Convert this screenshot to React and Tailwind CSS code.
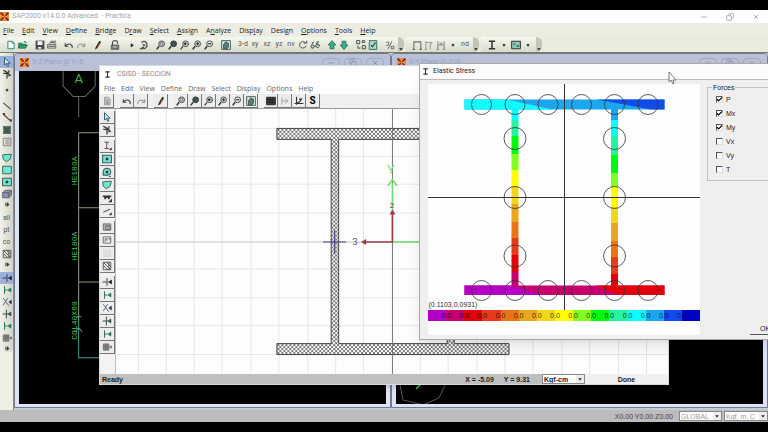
import { useState } from "react";
import { Minus, Copy, X, Check } from "lucide-react";
import clsx from "clsx";

// 16x16 toolbar glyphs
const GLYPHS = {
  new: <path d="M3 2h7l3 3v9H3zM10 2v3h3" fill="#f4fffb" stroke="#2a8f7c" strokeWidth="1.6" />,
  open: <path d="M1 13V5h5l1 2h5v2M1 13l3-5h11l-3 5zM9 3q3-2 5 2" fill="#3aa07c" stroke="#15604a" strokeWidth="1.2" />,
  save: (
    <>
      <path d="M1 1h14v14H1z" fill="#45474c" />
      <path d="M4 2h8v6H4zM5 11h5v3H5z" fill="#f1f1ee" />
    </>
  ),
  print: (
    <>
      <path d="M4 6l2-4h8l-2 4M1 7h13v6H1z" fill="#ddd" stroke="#555" strokeWidth="1.3" />
      <path d="M2 10h11M7 4h4" stroke="#444" strokeWidth="1.4" />
    </>
  ),
  doc: <path d="M4 2h6l3 3v9H4zM6 6h4M6 8h5M6 10h5M6 12h5" fill="#ccc" stroke="#8d8d8d" strokeWidth="1.3" />,
  undo: <path d="M2 5v5h5M2 10q5-6 10-2 2 2 1 5" fill="none" stroke="#444" strokeWidth="1.8" />,
  redo: <path d="M14 5v5H9M14 10Q9 4 4 8q-2 2-1 5" fill="none" stroke="#8b8b86" strokeWidth="1.6" />,
  pencil: (
    <>
      <path d="M4 12L10 1l3 2-6 10-4 2z" fill="#3b2a24" />
      <path d="M9 5l1.5 1L7 12" stroke="#c96a3d" fill="none" strokeWidth="1.2" />
    </>
  ),
  lock: (
    <>
      <path d="M4 8V4q0-3 4-3t4 3v2" fill="none" stroke="#555" strokeWidth="1.8" />
      <path d="M2 8h12v7H2z" fill="#777" stroke="#444" />
      <path d="M5 11h6" stroke="#eee" strokeWidth="1.4" />
    </>
  ),
  play: <path d="M6 5l5 3.5L6 12z" fill="#222" />,
  run: <path d="M4 4q5-4 8 1t-3 9l-6 0 5-3M6 7l4 2" fill="none" stroke="#484848" strokeWidth="1.9" />,
  zoomBox: (
    <>
      <circle cx="9" cy="6" r="4.6" fill="#d9dbd4" stroke="#444" strokeWidth="1.5" />
      <path d="M5 10l-4 5" stroke="#333" strokeWidth="2.4" />
      <path d="M7 4h4v4H7z" fill="none" stroke="#555" />
    </>
  ),
  zoomAll: (
    <>
      <circle cx="9" cy="6" r="4.6" fill="#3c5550" stroke="#333" strokeWidth="1.5" />
      <path d="M5 10l-4 5" stroke="#333" strokeWidth="2.4" />
    </>
  ),
  zoomPrev: (
    <>
      <circle cx="9" cy="6" r="4.6" fill="#cfe3dd" stroke="#444" strokeWidth="1.5" />
      <path d="M5 10l-4 5M7 6h5M9 4L7 6l2 2" stroke="#333" strokeWidth="1.9" fill="none" />
    </>
  ),
  zoomIn: (
    <>
      <circle cx="9" cy="6" r="4.6" fill="#cfe3dd" stroke="#444" strokeWidth="1.5" />
      <path d="M5 10l-4 5" stroke="#333" strokeWidth="2.4" />
      <path d="M6.500 6h5M9 3.500v5" stroke="#222" strokeWidth="1.7" />
    </>
  ),
  zoomOut: (
    <>
      <circle cx="9" cy="6" r="4.6" fill="#e5eae4" stroke="#444" strokeWidth="1.5" />
      <path d="M5 10l-4 5" stroke="#333" strokeWidth="2.4" />
      <path d="M6.500 6h5" stroke="#222" strokeWidth="1.7" />
    </>
  ),
  pan: (
    <>
      <path d="M1 1h14v14H1z" fill="#d7efe6" stroke="#3d5f58" strokeWidth="1.5" />
      <path d="M4 14V7l2-1V4l2-1 2 1 2 1v6l-2 3z" fill="#5b7a72" stroke="#333" />
    </>
  ),
  rotate: <path d="M12 4Q7 0 3 5q-2 6 4 8 5 0 6-4M9 5h5V1" fill="none" stroke="#555" strokeWidth="1.6" />,
  glasses: <path d="M1 10q3-4 6 0-3 6-6 0M9 9q3-4 6 0-3 6-6 0M3 6l3-3M10 6l4-4M7 10h2" fill="none" stroke="#486256" strokeWidth="1.7" />,
  up: <path d="M8 1L2 8h3v6h6V8h3z" fill="#38b48c" stroke="#1b6c54" strokeWidth="1.4" />,
  down: <path d="M8 15L2 8h3V2h6v6h3z" fill="#38b48c" stroke="#1b6c54" strokeWidth="1.4" />,
  tree: <path d="M1 1h5v5H1zM10 1h4v3h-4zM10 9h5v5h-5zM3 9v4h4" fill="none" stroke="#44554f" strokeWidth="1.6" />,
  tick: (
    <>
      <path d="M2 1h12v14H2z" fill="#a8dbc9" stroke="#2e7765" strokeWidth="1.6" />
      <path d="M5 8l2 3 5-7" fill="none" stroke="#333" strokeWidth="1.7" />
    </>
  ),
  ratio: <path d="M2 4q3-3 4 1t-4 4M11 2L5 14M10 10h4v4h-4z" fill="none" stroke="#666" strokeWidth="1.5" />,
  frame1: <path d="M3 15V3h11v12M1 15h4M12 15h4" fill="none" stroke="#6d6d72" strokeWidth="1.7" />,
  frame2: <path d="M3 15V2M3 4h10l-3 4M10 15V6M1 15h4" fill="none" stroke="#96968f" strokeWidth="1.5" />,
  frame3: <path d="M3 15V2M13 15V2M3 8h10M1 15h4M11 15h4M6 4l2 3 2-3" fill="none" stroke="#7d7d7d" strokeWidth="1.5" />,
  dot: <circle cx="8" cy="8" r="2.200" fill="#444" />,
  caret: <path d="M3 6h10l-5 6z" fill="#222" />,
  beam: <path d="M3 2h10M3 14h10M8 2v12" fill="none" stroke="#333" strokeWidth="2.400" />,
  image: (
    <>
      <path d="M1 2h14v12H1z" fill="#8fc9b7" stroke="#333" strokeWidth="1.6" />
      <path d="M4 5h3v3H4zM9 8h4v3H9z" fill="#3f7d6c" />
    </>
  ),
  pointer: <path d="M4 1v12l3-3 2 5 2-1-2-4h4z" fill="#c9f2e8" stroke="#2c5b70" strokeWidth="1.5" />,
  reshape: <path d="M2 2l6 3v10M8 5l5 5-3 1M2 7h5M11 2v4" fill="none" stroke="#333" strokeWidth="2" />,
  line: <path d="M2 3l12 10" stroke="#444" strokeWidth="1.7" />,
  lineDots: <path d="M2 2l12 11M1 1h3v3M12 11h3v3" stroke="#5d3a3a" fill="none" strokeWidth="1.7" />,
  cross: <path d="M2 2l12 12M14 2L2 14M4 8h8M8 3v10M3 3h10v10H3z" fill="#7c958a" stroke="#3c554c" strokeWidth="1.7" />,
  list: <path d="M2 2h12v12H2zM5 5h7M5 8h7M5 11h7" fill="#e6e6e0" stroke="#777" strokeWidth="1.4" />,
  poly: <path d="M1 3l14-1-2 8-6 4-5-4z" fill="#74e6cf" stroke="#39705f" strokeWidth="1.6" />,
  rect: <path d="M1 2h14v12H1z" fill="#74e6cf" stroke="#39705f" strokeWidth="1.6" />,
  rectDot: (
    <>
      <path d="M1 2h14v12H1z" fill="#74e6cf" stroke="#39605f" strokeWidth="1.7" />
      <path d="M6 6h4v4H6z" fill="#234" />
    </>
  ),
  round: (
    <>
      <path d="M2 13V7q1-5 6-5t6 5-6 6zM14 15h-3" fill="#74e6cf" stroke="#39605f" strokeWidth="1.700" />
      <path d="M6 6h4v4H6z" fill="#234" />
    </>
  ),
  cube: <path d="M1 6l4-4h10v8l-4 4H1zM1 6h10v8M11 6l4-4" fill="#8d92a8" stroke="#555a70" strokeWidth="1.4" />,
  more: <path d="M6 4v8M9 4v8l5-4z" stroke="#333" fill="#222" strokeWidth="1.600" />,
  hatch: <path d="M2 2h12v12H2zM2 2l12 12M7 2l7 7M2 7l7 7M11 2v12" fill="none" stroke="#555" strokeWidth="1.500" />,
  snapPoint: <path d="M1 8h6M8 2v12M10 8h2M11 8l4-3v6z" fill="#222" stroke="#333" strokeWidth="1.500" />,
  snapEnd: <path d="M4 2v12M4 8h5M10 8l4-3v6z" fill="#1d4f42" stroke="#257a64" strokeWidth="1.600" />,
  snapX: <path d="M2 2l9 12M9 2L2 13M11 8l4-3v6z" fill="#222" stroke="#555a77" strokeWidth="1.500" />,
  snapPerp: <path d="M7 1v14M1 8h9M10 8l4-3v6z" fill="#234" stroke="#33564d" strokeWidth="1.600" />,
  snapGrid: <path d="M2 3h9v10H2zM2 6h9M2 9h9M5 3v10M8 3v10M12 8l3-2v4z" fill="#999" stroke="#666" strokeWidth="1.200" />,
  angles: <path d="M1 5h14M3 5l2 4 3-4 3 4 2-4M12 14h3v-3z" fill="#555" stroke="#333" strokeWidth="1.800" />,
  rebar: <path d="M2 10l11-5M12 14h3v-3z" fill="#333" stroke="#444" strokeWidth="1.600" />,
  beamMore: <path d="M4 2h7M4 12h7M7.500 2v10M12 14h3v-3z" fill="#333" stroke="#663f4a" strokeWidth="1.500" />,
  group: <path d="M2 3h12v10H2zM6 6h7v6H6zM9 8h3" fill="#b5b5b5" stroke="#666" strokeWidth="1.400" />,
  tag: <path d="M2 3h12v10H2zM5 11V6h3v3M10 6h3v3" fill="none" stroke="#666" strokeWidth="1.400" />,
  ghost: <path d="M3 3h10v10H3zM6 6h6v5H6z" fill="none" stroke="#d2d2d2" strokeWidth="1.400" />,
  table: <path d="M1 2h14v12H1zM1 6h14M1 10h14M6 2v12M10 2v12" fill="#444" stroke="#222" strokeWidth="1.400" />,
  pm: <path d="M3 2v12M3 8h9M8 4l5 4-5 4" fill="none" stroke="#aaa" strokeWidth="1.600" />,
  curve: <path d="M4 1v13M1 12h14M4 12q6-2 9-8M8 5h5" fill="none" stroke="#333" strokeWidth="1.700" />,
};

const TEXT_GLYPHS = {
  "3-d": "3-d",
  xy: "xy",
  xz: "xz",
  yz: "yz",
  nv: "nv",
  nd: "nd",
  all: "all",
  pt: "pt",
  cb: "co",
  S: "S",
};

function Glyph({ name, className }) {
  if (TEXT_GLYPHS[name]) {
    return (
      <span className={clsx("leading-none", name === "S" ? "text-[10px] font-bold text-black" : "text-[7px] text-[#555]")}>
        {TEXT_GLYPHS[name]}
      </span>
    );
  }
  return (
    <svg viewBox="0 0 16 16" className={className} aria-hidden="true">
      {GLYPHS[name]}
    </svg>
  );
}

function SapLogo() {
  return (
    <svg viewBox="0 0 16 16" className="size-[9px] shrink-0" aria-hidden="true">
      <path d="M0 0h16v16H0z" fill="#f08a3c" />
      <path d="M1 1l14 14M15 1L1 15" stroke="#7a2d12" strokeWidth="3" />
      <path d="M4 8h8M8 4v8" stroke="#fbd08a" strokeWidth="2" />
      <path d="M6 6h4v4H6z" fill="#d9541e" />
    </svg>
  );
}

// [label, index of the underlined letter]
const MAIN_MENU = [
  ["File", 0], ["Edit", 0], ["View", 0], ["Define", 0], ["Bridge", 0], ["Draw", 1], ["Select", 0],
  ["Assign", 0], ["Analyze", 1], ["Display", 4], ["Design", 4], ["Options", 0], ["Tools", 0], ["Help", 0],
];

const SECTION_MENU = ["File", "Edit", "View", "Define", "Draw", "Select", "Display", "Options", "Help"];

const MAIN_TOOLS = [
  ["new", "open"],
  ["save", "print"],
  ["undo", "redo"],
  ["pencil"],
  ["lock"],
  ["play", "run"],
  ["zoomBox", "zoomAll", "zoomPrev", "zoomIn", "zoomOut"],
  ["pan"],
  ["3-d", "xy", "xz", "yz", "nv", "rotate", "glasses"],
  ["up", "down"],
  ["tree", "tick"],
  ["ratio"],
];

const SIDE_TOOLS = [
  ["pointer", "reshape"],
  ["dot"],
  ["line", "lineDots", "cross", "list"],
  ["poly", "rect", "rectDot", "cube", "more"],
  ["all", "pt", "cb", "hatch", "more"],
  ["snapPoint", "snapEnd", "snapX", "snapPerp", "snapEnd", "snapGrid", "more"],
];

const SECTION_TOOLS = [
  ["doc"],
  ["undo", "redo"],
  ["pencil"],
  ["zoomBox", "zoomAll", "zoomPrev", "zoomIn", "zoomOut", "pan"],
  ["table", "pm", "curve", "S"],
];

const SECTION_SIDE = [
  ["pointer", "reshape"],
  ["beamMore", "rectDot", "round", "poly", "angles", "rebar"],
  ["group", "tag", "ghost", "hatch"],
  ["snapPoint", "snapEnd", "snapX", "snapPerp", "snapEnd", "snapGrid"],
];

function ToolStrip({ groups, gap }) {
  return (
    <div className="flex h-[15px] items-center rounded-r-md bg-linear-to-b from-[#f6f7ef] to-[#d9dbcb] pl-[5px]">
      <div className={clsx("flex", gap)}>
        {groups.map((group, i) => (
          <div key={i} className="flex">
            {group.map((name, j) => (
              <button key={j} aria-label={name} className="flex h-3 w-3 items-center justify-center">
                <Glyph name={name} className="size-[10px]" />
              </button>
            ))}
          </div>
        ))}
      </div>
      <button aria-label="more" className="ml-[2px] flex h-full w-[6px] items-end rounded-r-md bg-[#c3c5b8]">
        <Glyph name="caret" className="size-[6px]" />
      </button>
    </div>
  );
}

function MainHeader() {
  return (
    <header className="shrink-0">
      <div className="flex h-[13px] items-center bg-white">
        <SapLogo />
        <h1 className="ml-[3px] flex-1 text-[7px] whitespace-pre text-[#a3a3a3]">SAP2000 v14.0.0 Advanced  - Practica</h1>
        <div className="flex gap-[18px] pr-2 text-[#888]">
          <button aria-label="minimize"><Minus className="size-2" strokeWidth={2} /></button>
          <button aria-label="restore"><Copy className="size-2 -scale-x-100" strokeWidth={2} /></button>
          <button aria-label="close"><X className="size-2" strokeWidth={2} /></button>
        </div>
      </div>
      <nav className="flex h-[14px] items-center gap-2 bg-[#ecede0] pl-[3px] font-['Open_Sans',sans-serif] text-[7px] text-[#222]">
        {MAIN_MENU.map(([label, u]) => (
          <button key={label}>
            {label.slice(0, u)}
            <span className="underline">{label[u]}</span>
            {label.slice(u + 1)}
          </button>
        ))}
      </nav>
      <div className="flex h-[16px] items-center gap-[2px] border-b border-[#77786f] bg-[#e9ebdc]">
        <ToolStrip groups={MAIN_TOOLS} gap="gap-[5px]" />
        <ToolStrip groups={[["frame1", "frame2", "frame3"], ["dot"], ["nd"]]} gap="gap-0" />
        <ToolStrip groups={[["beam", "dot"], ["image", "dot"]]} gap="gap-0" />
      </div>
    </header>
  );
}

function SideTools() {
  return (
    <aside className="w-[13px] shrink-0 bg-[#eff0e2]">
      <div className="flex flex-col gap-1 rounded-b bg-linear-to-r from-[#f1f2e9] to-[#d2d3c6] pt-[3px]">
        {SIDE_TOOLS.map((group, i) => (
          <div key={i} className="flex flex-col">
            {group.map((name, j) => (
              <button
                key={j}
                aria-label={name}
                className={clsx(
                  "flex items-center justify-center",
                  name === "more" ? "h-2" : "h-3",
                  (name === "pointer" || name === "snapPoint") && "bg-[#9db0dc]"
                )}
              >
                <Glyph name={name} className={name === "more" ? "size-[7px]" : "size-[10px]"} />
              </button>
            ))}
          </div>
        ))}
      </div>
    </aside>
  );
}

function ChildWindow({ title, children }) {
  return (
    <section className="flex min-w-0 flex-1 flex-col rounded-t border border-[#73788a] bg-[#dbe3f4] px-1 pb-[3px]">
      <div className="-mx-1 flex h-[17px] items-center gap-[3px] rounded-t bg-[#b9c1d9] px-[5px]">
        <SapLogo />
        <h2 className="flex-1 text-[7px] text-[#93a2c4]">{title}</h2>
        <div className="flex gap-1 pr-px text-[#7c849d]">
          <button aria-label="minimize" className="rounded-sm border border-[#a1a9c2] px-1"><Minus className="size-2" /></button>
          <button aria-label="restore" className="rounded-sm border border-[#a1a9c2] px-1"><Copy className="size-2" /></button>
          <button aria-label="close" className="rounded-sm border border-[#a1a9c2] px-1"><X className="size-2" /></button>
        </div>
      </div>
      <div className="min-h-0 flex-1 overflow-hidden bg-black">{children}</div>
    </section>
  );
}

function FrameElevation() {
  return (
    <svg viewBox="19 71 366 332" preserveAspectRatio="xMinYMin" className="size-full" fill="none">
      <path d="M63 70v16l10 10.500h12L95 86V70M78.500 97v20" stroke="#666" />
      <text x="78.500" y="83" textAnchor="middle" fontSize="13" fill="#3fb34f">A</text>
      <path d="M78.500 320V132.500H387M78.500 207.500H387M78.500 281.500H387" stroke="#8c9a80" />
      <path d="M78.500 318v39H387M75 331l3.500-4 3.500 4M76 316h5" stroke="#4d9c92" />
      <g fill="#45c258" fontFamily="Liberation Mono, monospace" fontSize="8">
        <text transform="translate(77 185) rotate(-90)">HE180A</text>
        <text transform="translate(77 260) rotate(-90)">HE180A</text>
        <text transform="translate(77 339) rotate(-90)">COL40X60</text>
      </g>
    </svg>
  );
}

function PlanView() {
  return (
    <svg viewBox="396 71 366 332" preserveAspectRatio="xMinYMin" className="size-full" fill="none">
      <path d="M400 384l3 15 20 5 16-7 6-13" stroke="#555" />
      <path d="M416 388l4-4" stroke="#3fb34f" strokeWidth="1.500" />
    </svg>
  );
}

const GRID_X = [138, 166, 194, 222, 251, 279, 308, 336, 364, 421, 449, 478, 506, 534, 563, 591, 620, 648];
const GRID_Y = [129, 157, 185, 214, 270, 299, 327, 356];

function SectionCanvas() {
  return (
    <svg viewBox="115 109 554 266" preserveAspectRatio="xMinYMin" className="size-full bg-[#fdfdfd]" fill="none">
      <defs>
        <pattern id="hatch" width="4" height="4" patternUnits="userSpaceOnUse">
          <path d="M0 0l4 4M4 0L0 4" stroke="#444" strokeWidth="0.700" />
        </pattern>
      </defs>
      <g stroke="#e6e6e6">
        {GRID_X.map((x) => <path key={x} d={`M${x - 0.5} 109v266`} />)}
        {GRID_Y.map((y) => <path key={y} d={`M115 ${y - 0.5}h554`} />)}
      </g>
      <path d="M115 242.500h554" stroke="#c4c4c4" />
      <g fill="url(#hatch)" stroke="#444">
        <path d="M276.500 128.500h233v11h-55v205h55v11h-233v-11h54.500v-205h-54.500z M338.500 139.500v205h109v-205z" fillRule="evenodd" />
      </g>
      <path d="M392.500 109v266" stroke="#777" />
      <path d="M392.500 242.500V183M388 186l4.500-6 4.500 6M393 242.500h60" stroke="#6fdc6f" strokeWidth="1.500" />
      <path d="M392.500 213v29.500H363" stroke="#9c3b52" strokeWidth="1.500" />
      <path d="M392.500 210l-3 5h6zM361 242.500l5-3v6z" fill="#9c3b52" />
      <path d="M323 242.500h23M334.500 231v23" stroke="#3d3f86" />
      <g textAnchor="middle">
        <text x="391" y="174" fontSize="12" fill="#7be07b">Y</text>
        <text x="392" y="208" fontSize="8" fill="#7b3b52">2</text>
        <text x="355" y="246" fontSize="9" fill="#5b4b5f">3</text>
      </g>
    </svg>
  );
}

function SectionWindow() {
  return (
    <section className="absolute top-3 left-[99px] flex h-[320px] w-[570px] flex-col border border-[#d7dae2] bg-white shadow-md">
      <div className="flex h-4 shrink-0 items-center gap-[6px] pl-1">
        <Glyph name="beam" className="size-[7px]" />
        <h2 className="text-[7px] text-[#8a8a8a]">CSISD - SECCION</h2>
      </div>
      <nav className="flex h-3 shrink-0 items-center gap-[6px] pl-1 font-['Open_Sans',sans-serif] text-[7px] text-[#666]">
        {SECTION_MENU.map((label) => (
          <button key={label}>{label}</button>
        ))}
      </nav>
      <div className="flex h-[15px] shrink-0 gap-[6px] border-b border-[#999] bg-[#f0f0f0]">
        {SECTION_TOOLS.map((group, i) => (
          <div key={i} className="flex">
            {group.map((name) => (
              <button
                key={name}
                aria-label={name}
                className="flex w-[14px] items-center justify-center border-r border-b border-[#777] bg-[#ececec]"
              >
                <Glyph name={name} className="size-[10px]" />
              </button>
            ))}
          </div>
        ))}
      </div>
      <div className="flex min-h-0 flex-1">
        <div className="flex w-4 shrink-0 flex-col gap-[3px] border-r border-[#bbb] bg-[#f3f3f3] pt-[2px]">
          {SECTION_SIDE.map((group, i) => (
            <div key={i} className="flex flex-col">
              {group.map((name, j) => (
                <button
                  key={j}
                  aria-label={name}
                  className="flex h-[13px] items-center justify-center border-r border-b border-[#777] bg-[#ececec]"
                >
                  <Glyph name={name} className="size-[10px]" />
                </button>
              ))}
            </div>
          ))}
        </div>
        <div className="min-w-0 flex-1">
          <SectionCanvas />
        </div>
      </div>
      <footer className="flex h-[10px] shrink-0 items-center bg-[#bfbfbf] pl-[2px] font-[Liberation_Sans] text-[7px] leading-none font-bold text-[#222]">
        <span className="flex-1">Ready</span>
        <span>X = -5.09</span>
        <span className="mr-3 ml-[10px]">Y = 9.31</span>
        <UnitSelect value="Kgf-cm" className="w-[43px] text-[#222]" />
        <span className="flex h-full w-[83px] items-center justify-center bg-[#f0f0f0]">Done</span>
      </footer>
    </section>
  );
}

function UnitSelect({ value, className }) {
  return (
    <label className={clsx("flex h-[10px] items-center border border-[#888] bg-white", className)}>
      <select aria-label="Units" className="min-w-0 flex-1 appearance-none pl-px leading-none outline-none">
        <option>{value}</option>
      </select>
      <span className="flex h-full w-2 items-center justify-center bg-[#ececec]">
        <Glyph name="caret" className="size-[6px]" />
      </span>
    </label>
  );
}

const SPECTRUM = [
  "#b400c4", "#c8006e", "#e2000c", "#e63a18", "#e97518", "#eaa71d", "#f0d71c", "#ffff00",
  "#80ff20", "#00fa10", "#25f3a0", "#10fbff", "#1ba6ee", "#124ce8", "#0000c4",
];

// y where each colour of a web starts
const LEFT_WEB = [
  [109, 11], [120, 10], [136, 9], [154, 8], [170, 7], [186, 6], [204, 5], [222, 4], [238, 3], [255, 2], [272, 1],
];
const RIGHT_WEB = [
  [109, 12], [120, 11], [136, 10], [155, 9], [173, 8], [187, 7], [207, 6], [223, 5], [241, 4], [257, 3], [274, 2],
];

function Web({ x, bands }) {
  return bands.map(([y, color], i) => (
    <rect key={y} x={x} y={y} width="7" height={(bands[i + 1]?.[0] ?? 286) - y} fill={SPECTRUM[color]} />
  ));
}

function StressPlot() {
  return (
    <svg viewBox="428 84 272 226" className="block h-[226px] w-full" fill="none">
      <Web x={511.5} bands={LEFT_WEB} />
      <Web x={611} bands={RIGHT_WEB} />
      <path d="M464.500 99.500h200v10h-200z" fill={SPECTRUM[12]} />
      <path d="M464.500 99.500h42l46 10h-88z" fill={SPECTRUM[11]} />
      <path d="M597 99.500h67.500v10H651z" fill={SPECTRUM[13]} />
      <path d="M464.500 285.500h200v9.500h-200z" fill={SPECTRUM[1]} />
      <path d="M464.500 285.500h46l32 9.500h-78z" fill={SPECTRUM[0]} />
      <path d="M596 285.500h68.500v9.500h-45z" fill={SPECTRUM[2]} />
      <path d="M564.500 84v226M428 197.500h272" stroke="#333" />
      <g stroke="#333" strokeWidth="0.800">
        {[481.5, 515, 548, 581.5, 614.5, 648].map((x) => (
          <g key={x}>
            <circle cx={x} cy="104.500" r="10" />
            <circle cx={x} cy="290.500" r="10" />
          </g>
        ))}
        {[138.5, 197.5, 256].map((y) => (
          <g key={y}>
            <circle cx="515" cy={y} r="11" />
            <circle cx="614.500" cy={y} r="11" />
          </g>
        ))}
      </g>
      <text x="428.500" y="307" fontSize="7" fill="#333" fontFamily="Liberation Sans, sans-serif">(0.1103,0.0931)</text>
    </svg>
  );
}

const SWATCHES = [
  "bg-[#b400c4]", "bg-[#c8006e]", "bg-[#e2000c]", "bg-[#e63a18]", "bg-[#e97518]",
  "bg-[#eaa71d]", "bg-[#f0d71c]", "bg-[#ffff00]", "bg-[#80ff20]", "bg-[#00fa10]",
  "bg-[#25f3a0]", "bg-[#10fbff]", "bg-[#1ba6ee]", "bg-[#124ce8]", "bg-[#0000c4]",
];

function Legend() {
  return (
    <div className="relative">
      <div className="grid h-[11px] grid-cols-15">
        {SWATCHES.map((color) => (
          <div key={color} className={color} />
        ))}
      </div>
      {/* labels sit on the boundaries between swatches */}
      <div className="absolute inset-0 grid grid-cols-14 items-center px-[9px] text-center font-[Liberation_Sans] text-[7px] leading-none text-black/80">
        {SWATCHES.slice(1).map((color) => (
          <span key={color}>0.0</span>
        ))}
      </div>
    </div>
  );
}

function StressDialog() {
  const [forces, setForces] = useState({ P: true, Mx: true, My: true, Vx: false, Vy: false, T: false });

  return (
    <section className="absolute top-[10px] right-0 left-[419px] flex h-[277px] flex-col overflow-hidden border border-r-0 border-[#a9a9a9] bg-[#efefef] shadow-lg">
      <div className="flex h-4 shrink-0 items-center gap-1 border-b border-[#bbb] bg-[#fcfcfc] pl-[2px]">
        <Glyph name="beam" className="size-[7px]" />
        <h2 className="text-[7px] leading-none text-[#222]">Elastic Stress</h2>
      </div>
      <div className="flex min-h-0 flex-1 gap-[7px] py-1 pl-2">
        <div className="w-[272px] shrink-0 bg-[#fdfdfd]">
          <StressPlot />
          <Legend />
        </div>
        <div className="flex min-w-0 flex-1 flex-col justify-between font-[Liberation_Sans] text-[7px] leading-none text-[#222]">
          <fieldset className="-mr-2 border border-[#c2c2c2] px-2 pt-px pb-1">
            <legend className="-ml-1 px-px">Forces</legend>
            {Object.entries(forces).map(([name, on]) => (
              <label key={name} className="flex h-[14px] items-center gap-[3px]">
                <span className="relative flex">
                  <input
                    type="checkbox"
                    checked={on}
                    onChange={() => setForces({ ...forces, [name]: !on })}
                    className="size-[7px] appearance-none border border-r-[#ddd] border-b-[#ddd] border-t-[#555] border-l-[#555] bg-white"
                  />
                  {on && <Check className="pointer-events-none absolute inset-0 size-[7px] text-black" strokeWidth={4} />}
                </span>
                {name}
              </label>
            ))}
          </fieldset>
          <button className="-mr-3 h-[12px] w-[30px] self-end border-b border-[#555] text-center">OK</button>
        </div>
      </div>
    </section>
  );
}

export default function App() {
  return (
    <div className="flex h-screen flex-col overflow-hidden bg-black py-[10px] font-[Roboto,sans-serif] leading-none">
      <MainHeader />
      <main className="relative flex min-h-0 flex-1">
        <SideTools />
        <div className="flex min-w-0 flex-1 border-l border-[#8a8d92] bg-[#c3cadb] pb-[2px]">
          <ChildWindow title="X-Z Plane @ Y=0">
            <FrameElevation />
          </ChildWindow>
          <ChildWindow title="X-Y Plane @ Z=0">
            <PlanView />
          </ChildWindow>
        </div>
        <SectionWindow />
        <StressDialog />
        <svg viewBox="0 0 8 12" className="absolute top-[19px] left-[668px] h-3 w-2" aria-hidden="true">
          <path d="M1 0v10l2-2 2 4 1-1-1-3h3z" fill="#fff" stroke="#555" strokeWidth="0.800" />
        </svg>
      </main>
      <footer className="flex h-3 shrink-0 items-center justify-end gap-[2px] bg-[#bcbcbc] font-[Liberation_Sans] text-[7px] text-[#444]">
        <span className="mr-1">X0.00 Y0.00 Z0.00</span>
        <UnitSelect value="GLOBAL" className="w-[43px] text-[#999]" />
        <UnitSelect value="Kgf, m, C" className="w-[44px] text-[#999]" />
      </footer>
    </div>
  );
}
